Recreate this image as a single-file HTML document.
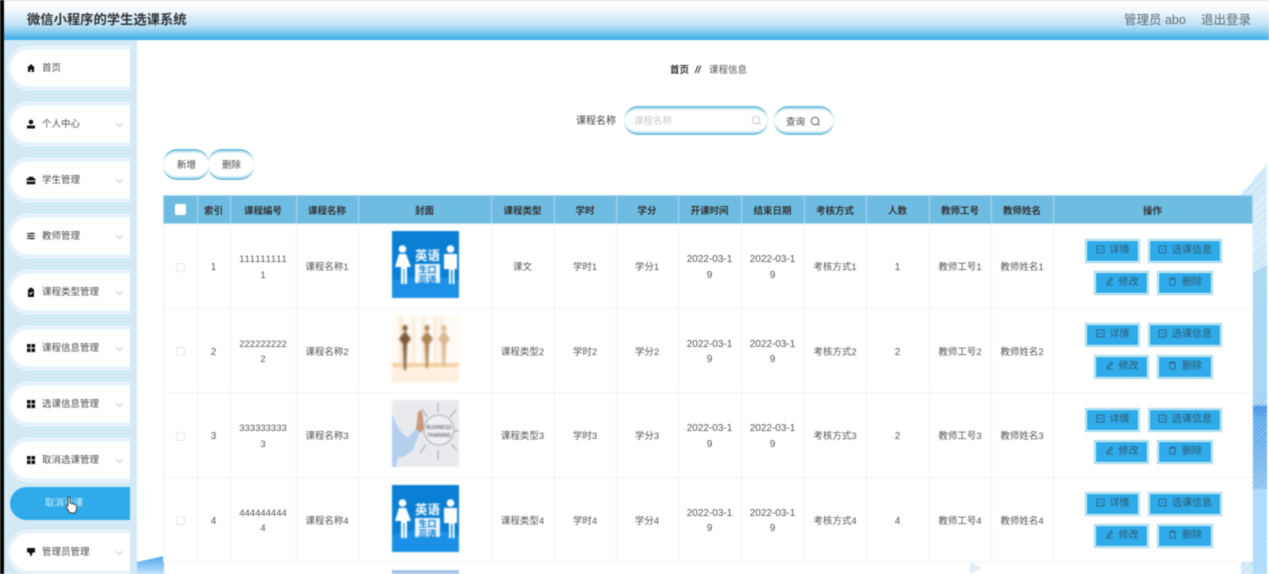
<!DOCTYPE html>
<html lang="zh"><head><meta charset="utf-8"><title>微信小程序的学生选课系统</title>
<style>
*{box-sizing:border-box}
html{overflow:hidden;width:1269px;height:574px}
html,body{margin:0;padding:0}
body{width:1269px;height:574px;overflow:hidden;position:relative;background:#fff;font-family:"Liberation Sans","Noto Sans CJK SC",sans-serif;color:#555}
#wrap{position:absolute;left:0;top:0;width:1269px;height:574px;overflow:hidden;filter:blur(.4px);background:#fff}
.hd{position:absolute;left:0;top:0;width:1269px;height:40px;background:linear-gradient(180deg,#fff 0%,#f2f8fc 25%,#b9dff5 65%,#39ace8 100%);border-top:1px solid #ddd}
.title{position:absolute;left:27px;top:11px;font-size:13.3px;font-weight:bold;color:#333;line-height:16px}
.tr{position:absolute;top:11px;font-size:12.5px;line-height:16px;color:#606a72}
.bar{position:absolute;left:0;top:0;width:4px;height:574px;background:#050505}
.side{position:absolute;left:4px;top:40px;width:133px;height:534px;background:#d3eaf6}
.mi{position:absolute;z-index:0;left:7px;width:123px;height:44px;background:#dfeff9;border-radius:22px 0 0 22px;border:1px solid #f2f9fd;border-right:none;font-size:9.5px;color:#4a4a4a;line-height:44px;padding-left:34px}
.mi::before{content:"";position:absolute;z-index:-1;left:2px;top:2px;right:0;bottom:2px;background:#fff;border-radius:20px 0 0 20px}
.mi svg.i{position:absolute;left:18px;top:16px;width:10px;height:10px}
.mi svg.c{position:absolute;right:6px;top:18.500px;width:9px;height:6px}
.act{position:absolute;left:10px;top:487px;width:120px;height:33px;background:#2fabe9;border-radius:17px 0 0 17px;color:#d5eefb;font-size:9.5px;line-height:33px;padding-left:35px}
.deco1{position:absolute;left:1241px;top:163px;width:26px;height:411px;background:repeating-linear-gradient(-45deg,#a9d8f3 0 1px,#fff 1px 2px);clip-path:polygon(100% 0,100% 100%,0 100%,0 32px)}
.deco2{position:absolute;left:1253px;top:265px;width:14px;height:309px;background:repeating-linear-gradient(-45deg,rgba(255,255,255,.3) 0 1px,transparent 1px 3px),linear-gradient(180deg,#a5d5f2 0,#9fd0f0 45%,#3a8ce8 46%,#5aa6ea 50%,#85c0ef 72%,#a8d9fa 73%,#a8d9fa 100%);clip-path:polygon(0 8px,100% 0,100% 100%,0 100%)}
.deco3{position:absolute;left:137px;top:556px;width:27px;height:18px;background:linear-gradient(180deg,#4aa6ee,#bfe0fa);clip-path:polygon(0 6px,100% 0,100% 100%,0 100%)}
.deco4{position:absolute;left:970px;top:562px;width:12px;height:12px;background:#e0eefa;clip-path:polygon(0 0,100% 50%,0 100%)}
.bc{position:absolute;top:64px;font-size:9.5px;line-height:14px;color:#555;white-space:nowrap}
.lbl{position:absolute;left:576px;top:115px;font-size:10px;line-height:14px;color:#444}
.pill{position:absolute;background:#fff;border-radius:14px;border-top:2px solid #6fc0de;border-bottom:2px solid #6fc0de;box-shadow:inset 0 2px 0 #d5ecf5,inset 0 -2px 0 #d5ecf5}
.pill span{position:absolute;font-size:9.5px;line-height:14px;color:#444;white-space:nowrap}
table{position:absolute;left:162.5px;top:195px;width:1089px;border-collapse:collapse;table-layout:fixed;font-size:9.5px;color:#555;background:#fff}
th{height:28px;background:#6fbce2;color:#333;font-weight:bold;font-size:9.5px;border:1px solid #a9d8ee;padding:0;text-align:center}
td{border:1px solid #f1f3f5;text-align:center;padding:4px 7px 0;line-height:15.5px;word-break:break-all}
td.k{padding-left:8px;padding-right:8px;font-kerning:none}
tr.r td{height:84.5px}
.n{font-size:10px}
.cb{display:inline-block;width:9px;height:9px;border:1px solid #e3e6ea;border-radius:2px;background:#fff;vertical-align:middle}
th .cb{border-color:#fff;width:11px;height:11px}
.pic{display:block;margin:0 auto;width:67px;height:67px;position:relative;top:-3px;left:.5px;filter:blur(.5px)}
.pic.s{filter:blur(1px)}
.ops{position:relative;height:60px;width:199px;margin:0}
.b{position:absolute;height:24px;background:#2fabe9;border:1px solid #8fd0e4;box-shadow:inset 0 0 0 1px #e3f3f9;font-size:10px;line-height:22px;color:#2f5a72;text-align:center;white-space:nowrap}
.b svg{width:9px;height:9px;vertical-align:-1px;margin-right:5px}
td.o{padding:0}
</style></head><body><div id="wrap">
<div class="deco1"></div><div class="deco2"></div><div class="deco3"></div>

<div class="bc" style="left:670px;font-weight:bold;color:#333">首页</div><div class="bc" style="left:695px;font-weight:bold;font-style:italic;color:#333;font-size:10px">//</div><div class="bc" style="left:709px">课程信息</div>
<div class="lbl">课程名称</div>
<div class="pill" style="left:624px;top:106px;width:144px;height:29px"><span style="left:10px;top:7px;color:#c5c9ce">课程名称</span><svg style="position:absolute;right:6px;top:7px" width="11" height="11" viewBox="0 0 11 11" fill="none" stroke="#c5c9ce"><circle cx="5" cy="5" r="3.800"/><path d="M8 8l2 2"/></svg></div>
<div class="pill" style="left:774px;top:106px;width:60px;height:29px"><span style="left:12px;top:7.500px">查询</span><svg style="position:absolute;left:36px;top:7.500px" width="11" height="11" viewBox="0 0 11 11" fill="none" stroke="#555"><circle cx="5" cy="5" r="3.800"/><path d="M8 8l1.500 1.500"/></svg></div>
<div class="pill" style="left:163px;top:149px;width:46px;height:31px"><span style="left:14px;top:8px">新增</span></div>
<div class="pill" style="left:208px;top:149px;width:46px;height:31px"><span style="left:14px;top:8px">删除</span></div>

<table>
<colgroup><col style="width:34px"><col style="width:33px"><col style="width:66px"><col style="width:62px"><col style="width:133px"><col style="width:63px"><col style="width:62px"><col style="width:62px"><col style="width:63px"><col style="width:63px"><col style="width:62px"><col style="width:63px"><col style="width:62px"><col style="width:62px"><col style="width:199px"></colgroup>
<tr><th><span class="cb"></span></th><th>索引</th><th>课程编号</th><th>课程名称</th><th>封面</th><th>课程类型</th><th>学时</th><th>学分</th><th>开课时间</th><th>结束日期</th><th>考核方式</th><th>人数</th><th>教师工号</th><th>教师姓名</th><th>操作</th></tr>

<tr class="r"><td><span class="cb"></span></td><td class="n">1</td><td class="k">1111111111</td><td>课程名称1</td><td>
<svg class="pic" viewBox="0 0 67 67"><rect width="67" height="67" fill="#0b7fd4"/><path d="M0 50Q33 40 67 50V67H0z" fill="#1a90e6"/><g fill="#fff"><circle cx="10.500" cy="18" r="3.800"/><path d="M7 23h7l5 13h-4v17h-2.500V38h-1v15H9V36H3z"/><circle cx="58.500" cy="18" r="3.800"/><path d="M52 23h13v15h-2.500v15h-2V39h-1.500v14h-2V38H52z"/><rect x="23" y="33" width="25" height="19" opacity=".92"/></g><text x="35.500" y="29" font-size="12.500" font-weight="bold" fill="#fff" text-anchor="middle">英语</text><text x="35.500" y="42" font-size="9" font-weight="bold" fill="#0b7fd4" text-anchor="middle">生口</text><text x="35.500" y="52" font-size="9" font-weight="bold" fill="#0b7fd4" text-anchor="middle">蕊语</text></svg></td><td>课文</td><td>学时1</td><td>学分1</td><td class="n">2022-03-19</td><td class="n">2022-03-19</td><td>考核方式1</td><td class="n">1</td><td>教师工号1</td><td>教师姓名1</td><td class="o"><div class="ops"><div class="b" style="left:31.500px;top:3px;width:55px"><svg viewBox="0 0 9 9" fill="none" stroke="#2f5a72" stroke-width=".8"><rect x="1" y="1" width="7" height="7"/><path d="M3 4.500h3"/></svg>详情</div><div class="b" style="left:94.500px;top:3px;width:74px"><svg viewBox="0 0 9 9" fill="none" stroke="#2f5a72" stroke-width=".8"><rect x="1" y="1" width="7" height="7"/><path d="M3 4.500h3"/></svg>选课信息</div><div class="b" style="left:40.500px;top:35px;width:55px"><svg viewBox="0 0 9 9" fill="none" stroke="#2f5a72" stroke-width=".8"><path d="M1 8h7M2 6l4-5 1.500 1-4 5z"/></svg>修改</div><div class="b" style="left:103.500px;top:35px;width:56px"><svg viewBox="0 0 9 9" fill="none" stroke="#2f5a72" stroke-width=".8"><path d="M1 2h7M3 2V1h3v1M2 2v6h5V2"/></svg>删除</div></div></td></tr>

<tr class="r"><td><span class="cb"></span></td><td class="n">2</td><td class="k">2222222222</td><td>课程名称2</td><td>
<svg class="pic s" viewBox="0 0 67 67"><rect width="67" height="67" fill="#fffaf4"/><g fill="#f9ead8"><rect x="7" y="0" width="4" height="48"/><rect x="20" y="0" width="3" height="48"/><rect x="30" y="0" width="3" height="48"/><rect x="42" y="0" width="3" height="48"/><rect x="48" y="0" width="3" height="48"/></g><rect y="47" width="67" height="4" fill="#f3cfa2"/><rect y="51" width="67" height="16" fill="#fdf0e0"/><g fill="#7d5a34"><ellipse cx="13" cy="12" rx="2.500" ry="3"/><path d="M13 15l6 8-4 5-1 26h-2l-1-26-4-5z"/></g><g fill="#a98255"><ellipse cx="35" cy="12" rx="2.500" ry="3"/><path d="M35 15l6 8-4 5-1 24h-2l-1-24-4-5z"/></g><g fill="#d9b78f"><ellipse cx="52" cy="12" rx="2.500" ry="3"/><path d="M52 15l6 8-4 5-1 22h-2l-1-22-4-5z"/></g></svg></td><td>课程类型2</td><td>学时2</td><td>学分2</td><td class="n">2022-03-19</td><td class="n">2022-03-19</td><td>考核方式2</td><td class="n">2</td><td>教师工号2</td><td>教师姓名2</td><td class="o"><div class="ops"><div class="b" style="left:31.500px;top:3px;width:55px"><svg viewBox="0 0 9 9" fill="none" stroke="#2f5a72" stroke-width=".8"><rect x="1" y="1" width="7" height="7"/><path d="M3 4.500h3"/></svg>详情</div><div class="b" style="left:94.500px;top:3px;width:74px"><svg viewBox="0 0 9 9" fill="none" stroke="#2f5a72" stroke-width=".8"><rect x="1" y="1" width="7" height="7"/><path d="M3 4.500h3"/></svg>选课信息</div><div class="b" style="left:40.500px;top:35px;width:55px"><svg viewBox="0 0 9 9" fill="none" stroke="#2f5a72" stroke-width=".8"><path d="M1 8h7M2 6l4-5 1.500 1-4 5z"/></svg>修改</div><div class="b" style="left:103.500px;top:35px;width:56px"><svg viewBox="0 0 9 9" fill="none" stroke="#2f5a72" stroke-width=".8"><path d="M1 2h7M3 2V1h3v1M2 2v6h5V2"/></svg>删除</div></div></td></tr>

<tr class="r"><td><span class="cb"></span></td><td class="n">3</td><td class="k">3333333333</td><td>课程名称3</td><td>
<svg class="pic" viewBox="0 0 67 67"><rect width="67" height="67" fill="#e8eaee"/><circle cx="47" cy="30" r="15" fill="#eef0f3" stroke="#a9acb2"/><g stroke="#a9acb2" stroke-width="1.200"><path d="M46 12V3M58 17l6-7M35 17l-5-8M62 31h5M59 44l6 6M46 50v10M34 45l-6 8"/></g><text x="47" y="29" font-size="5" fill="#444" text-anchor="middle">BUSINESS</text><text x="47" y="37" font-size="5" fill="#444" text-anchor="middle">TRAINING</text><path d="M0 14C4 24 9 35 16 37L24 29 28 31 21 50 13 56 6 58 4 67H0z" fill="#b4cfee"/><path d="M24 29l2-17 3-2 2 6 1 12-3 5z" fill="#c79a7d"/></svg></td><td>课程类型3</td><td>学时3</td><td>学分3</td><td class="n">2022-03-19</td><td class="n">2022-03-19</td><td>考核方式3</td><td class="n">2</td><td>教师工号3</td><td>教师姓名3</td><td class="o"><div class="ops"><div class="b" style="left:31.500px;top:3px;width:55px"><svg viewBox="0 0 9 9" fill="none" stroke="#2f5a72" stroke-width=".8"><rect x="1" y="1" width="7" height="7"/><path d="M3 4.500h3"/></svg>详情</div><div class="b" style="left:94.500px;top:3px;width:74px"><svg viewBox="0 0 9 9" fill="none" stroke="#2f5a72" stroke-width=".8"><rect x="1" y="1" width="7" height="7"/><path d="M3 4.500h3"/></svg>选课信息</div><div class="b" style="left:40.500px;top:35px;width:55px"><svg viewBox="0 0 9 9" fill="none" stroke="#2f5a72" stroke-width=".8"><path d="M1 8h7M2 6l4-5 1.500 1-4 5z"/></svg>修改</div><div class="b" style="left:103.500px;top:35px;width:56px"><svg viewBox="0 0 9 9" fill="none" stroke="#2f5a72" stroke-width=".8"><path d="M1 2h7M3 2V1h3v1M2 2v6h5V2"/></svg>删除</div></div></td></tr>

<tr class="r"><td><span class="cb"></span></td><td class="n">4</td><td class="k">4444444444</td><td>课程名称4</td><td>
<svg class="pic" viewBox="0 0 67 67"><rect width="67" height="67" fill="#0b7fd4"/><path d="M0 50Q33 40 67 50V67H0z" fill="#1a90e6"/><g fill="#fff"><circle cx="10.500" cy="18" r="3.800"/><path d="M7 23h7l5 13h-4v17h-2.500V38h-1v15H9V36H3z"/><circle cx="58.500" cy="18" r="3.800"/><path d="M52 23h13v15h-2.500v15h-2V39h-1.500v14h-2V38H52z"/><rect x="23" y="33" width="25" height="19" opacity=".92"/></g><text x="35.500" y="29" font-size="12.500" font-weight="bold" fill="#fff" text-anchor="middle">英语</text><text x="35.500" y="42" font-size="9" font-weight="bold" fill="#0b7fd4" text-anchor="middle">生口</text><text x="35.500" y="52" font-size="9" font-weight="bold" fill="#0b7fd4" text-anchor="middle">蕊语</text></svg></td><td>课程类型4</td><td>学时4</td><td>学分4</td><td class="n">2022-03-19</td><td class="n">2022-03-19</td><td>考核方式4</td><td class="n">4</td><td>教师工号4</td><td>教师姓名4</td><td class="o"><div class="ops"><div class="b" style="left:31.500px;top:3px;width:55px"><svg viewBox="0 0 9 9" fill="none" stroke="#2f5a72" stroke-width=".8"><rect x="1" y="1" width="7" height="7"/><path d="M3 4.500h3"/></svg>详情</div><div class="b" style="left:94.500px;top:3px;width:74px"><svg viewBox="0 0 9 9" fill="none" stroke="#2f5a72" stroke-width=".8"><rect x="1" y="1" width="7" height="7"/><path d="M3 4.500h3"/></svg>选课信息</div><div class="b" style="left:40.500px;top:35px;width:55px"><svg viewBox="0 0 9 9" fill="none" stroke="#2f5a72" stroke-width=".8"><path d="M1 8h7M2 6l4-5 1.500 1-4 5z"/></svg>修改</div><div class="b" style="left:103.500px;top:35px;width:56px"><svg viewBox="0 0 9 9" fill="none" stroke="#2f5a72" stroke-width=".8"><path d="M1 2h7M3 2V1h3v1M2 2v6h5V2"/></svg>删除</div></div></td></tr>
</table>
<div style="position:absolute;left:392px;top:570px;width:67px;height:4px;background:#a9c5e6"></div>
<div class="deco4"></div>

<div class="side"></div>
<div class="mi" style="top:46px"><svg class="i" viewBox="0 0 10 10"><path d="M5 1L1 5h1v4h2.300V6.500h1.400V9H8V5h1z" fill="#111"/></svg>首页</div>
<div class="mi" style="top:102px"><svg class="i" viewBox="0 0 10 10"><circle cx="5" cy="3" r="2.300" fill="#111"/><rect x="1" y="6.500" width="8" height="3" fill="#111"/></svg>个人中心<svg class="c" viewBox="0 0 9 6" fill="none" stroke="#b9c0c6" stroke-width=".8"><path d="M1 1l3.500 3.500L8 1"/></svg></div>
<div class="mi" style="top:158px"><svg class="i" viewBox="0 0 10 10"><path d="M1 3.500h8V9H1zM3 3.500V2h4v1.500" fill="#111" stroke="#111" stroke-width=".6"/><path d="M1 6h8" stroke="#fff"/></svg>学生管理<svg class="c" viewBox="0 0 9 6" fill="none" stroke="#b9c0c6" stroke-width=".8"><path d="M1 1l3.500 3.500L8 1"/></svg></div>
<div class="mi" style="top:214px"><svg class="i" viewBox="0 0 10 10" stroke="#222" fill="none"><path d="M1 2.500h8M1 5h8M1 7.500h8"/><path d="M6 1.500v2M3.500 4v2M6 6.500v2" stroke-width="1.500"/></svg>教师管理<svg class="c" viewBox="0 0 9 6" fill="none" stroke="#b9c0c6" stroke-width=".8"><path d="M1 1l3.500 3.500L8 1"/></svg></div>
<div class="mi" style="top:270px"><svg class="i" viewBox="0 0 10 10"><path d="M2 2h6v8H2z" fill="#111"/><rect x="3.500" y=".8" width="3" height="2" fill="#111"/><path d="M3.500 6l1 1 2-2" stroke="#fff" fill="none"/></svg>课程类型管理<svg class="c" viewBox="0 0 9 6" fill="none" stroke="#b9c0c6" stroke-width=".8"><path d="M1 1l3.500 3.500L8 1"/></svg></div>
<div class="mi" style="top:326px"><svg class="i" viewBox="0 0 10 10" fill="#111"><rect x="1" y="1" width="3.600" height="3.600"/><rect x="5.500" y="1" width="3.600" height="3.600"/><rect x="1" y="5.500" width="3.600" height="3.600"/><rect x="5.500" y="5.500" width="3.600" height="3.600"/></svg>课程信息管理<svg class="c" viewBox="0 0 9 6" fill="none" stroke="#b9c0c6" stroke-width=".8"><path d="M1 1l3.500 3.500L8 1"/></svg></div>
<div class="mi" style="top:382px"><svg class="i" viewBox="0 0 10 10" fill="#111"><rect x="1" y="1" width="3.600" height="3.600"/><rect x="5.500" y="1" width="3.600" height="3.600"/><rect x="1" y="5.500" width="3.600" height="3.600"/><rect x="5.500" y="5.500" width="3.600" height="3.600"/></svg>选课信息管理<svg class="c" viewBox="0 0 9 6" fill="none" stroke="#b9c0c6" stroke-width=".8"><path d="M1 1l3.500 3.500L8 1"/></svg></div>
<div class="mi" style="top:438px"><svg class="i" viewBox="0 0 10 10" fill="#111"><rect x="1" y="1" width="3.600" height="3.600"/><rect x="5.500" y="1" width="3.600" height="3.600"/><rect x="1" y="5.500" width="3.600" height="3.600"/><rect x="5.500" y="5.500" width="3.600" height="3.600"/></svg>取消选课管理<svg class="c" viewBox="0 0 9 6" fill="none" stroke="#b9c0c6" stroke-width=".8"><path d="M1 1l3.500 3.500L8 1"/></svg></div>
<div class="act">取消选课</div>
<svg style="position:absolute;left:65px;top:496px" width="12" height="18" viewBox="0 0 12 18"><path d="M3 1.500c1-1 2-.5 2 .5v5l5 1.500c1 .5 1.500 1 1.500 2v3l-1.500 3.500H5L1 10.500c-.5-1 .5-2 1.500-1L3 10z" fill="#fff" stroke="#333" stroke-width=".9"/></svg>
<div class="mi" style="top:530px"><svg class="i" viewBox="0 0 10 10" fill="#111"><path d="M1 1h8v4.500H6.500V7H5.800v2H4.200V7H3.500V5.500H1z"/></svg>管理员管理<svg class="c" viewBox="0 0 9 6" fill="none" stroke="#b9c0c6" stroke-width=".8"><path d="M1 1l3.500 3.500L8 1"/></svg></div>

<div class="hd"><div class="title">微信小程序的学生选课系统</div><div class="tr" style="left:1124px">管理员 abo</div><div class="tr" style="left:1201px">退出登录</div></div>
<div class="bar"></div>
</div></body></html>
